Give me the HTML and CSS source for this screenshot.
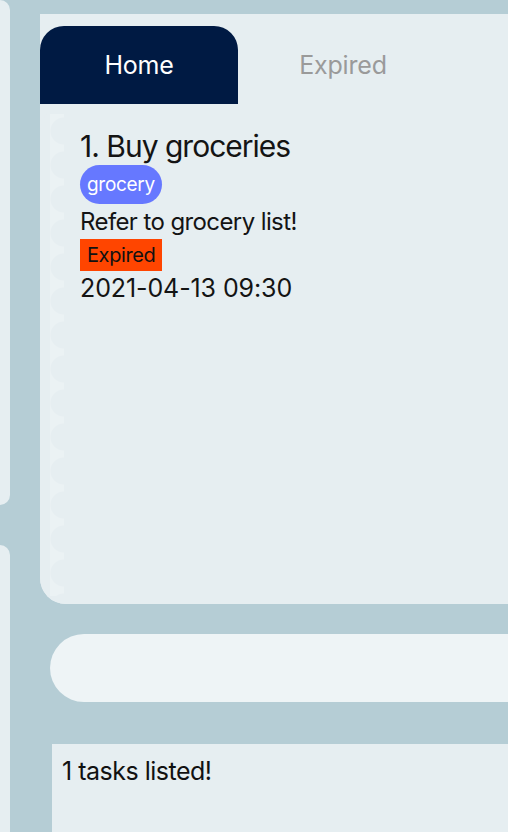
FILE: index.html
```html
<!DOCTYPE html>
<html>
<head>
<meta charset="utf-8">
<link rel="stylesheet" href="styles.css">
</head>
<body>
<div class="app">
  <aside class="sidebar">
    <div class="side-block side-top"></div>
    <div class="side-block side-bottom"></div>
  </aside>
  <main class="main">
    <section class="panel">
      <div class="tabs">
        <div class="tab tab-active">Home</div>
        <div class="tab tab-idle">Expired</div>
      </div>
      <div class="card">
        <div class="scallops"></div>
        <div class="task">
          <div class="task-title">1. Buy groceries</div>
          <div class="tags"><span class="tag">grocery</span></div>
          <div class="task-desc">Refer to grocery list!</div>
          <div class="status"><span class="status-badge">Expired</span></div>
          <div class="task-date">2021-04-13 09:30</div>
        </div>
      </div>
    </section>
    <div class="command"></div>
    <div class="result">1 tasks listed!</div>
  </main>
</div>
</body>
</html>
```
FILE: styles.css
```css
html, body {
  margin: 0;
  padding: 0;
  height: 100%;
  overflow: hidden;
}
body {
  background: #b5cdd5;
  font-family: Inter, "Noto Sans", sans-serif;
  color: #141414;
}
.app {
  display: flex;
  height: 832px;
  gap: 30px;
}
.sidebar {
  width: 10px;
  display: flex;
  flex-direction: column;
  gap: 40px;
}
.side-block {
  background: #e6eef1;
}
.side-top {
  height: 505px;
  border-radius: 0 14px 14px 0;
}
.side-bottom {
  flex: 1;
  border-radius: 0 14px 0 0;
}
.main {
  flex: 1;
  display: flex;
  flex-direction: column;
  padding-top: 14px;
}
.panel {
  background: #e6eef1;
  height: 590px;
  display: flex;
  flex-direction: column;
  border-radius: 0 0 0 26px;
}
.tabs {
  display: flex;
  padding-top: 12px;
  height: 78px;
}
.tab {
  display: flex;
  align-items: center;
  justify-content: center;
  font-size: 25px;
  letter-spacing: -0.2px;
}
.tab-active {
  width: 198px;
  background: #001a43;
  color: #ffffff;
  border-radius: 24px 24px 0 0;
}
.tab-idle {
  width: 210px;
  color: #9a9a9a;
}
.card {
  position: relative;
  flex: 1;
  background: #e6eef1;
  border-radius: 28px 0 0 26px;
  overflow: hidden;
}
.scallops {
  position: absolute;
  left: 10px;
  top: 10px;
  bottom: 8px;
  width: 30px;
  background-image: radial-gradient(circle at 100% 50%, transparent 13px, rgba(255,255,255,0.35) 14px, rgba(255,255,255,0.35) 100%);
  background-size: 30px 34px;
  background-position: -16px 0;
  background-repeat: repeat-y;
  opacity: 0.6;
}
.task {
  position: relative;
  padding: 25px 0 0 40px;
}
.task-title {
  font-size: 30px;
  line-height: 34px;
  letter-spacing: -1px;
}
.tags {
  margin-top: 2px;
  display: flex;
}
.tag {
  background: #6678ff;
  color: #ffffff;
  font-size: 19px;
  line-height: 39px;
  height: 39px;
  padding: 0 7px;
  border-radius: 20px;
  letter-spacing: -0.3px;
}
.task-desc {
  font-size: 24px;
  line-height: 35px;
  letter-spacing: -0.6px;
}
.status {
  display: flex;
}
.status-badge {
  background: #ff4500;
  color: #111;
  font-size: 20px;
  line-height: 32px;
  padding: 0 7px;
  letter-spacing: -0.4px;
}
.task-date {
  font-size: 25px;
  line-height: 34px;
  letter-spacing: -0.1px;
}
.command {
  margin: 30px 0 0 10px;
  height: 68px;
  background: #eef4f6;
  border-radius: 34px 0 0 34px;
}
.result {
  margin: 42px 0 0 12px;
  flex: 1;
  background: #e6eef1;
  padding: 12px 0 0 10px;
  font-size: 25px;
  color: #111;
  letter-spacing: -0.5px;
}
```
